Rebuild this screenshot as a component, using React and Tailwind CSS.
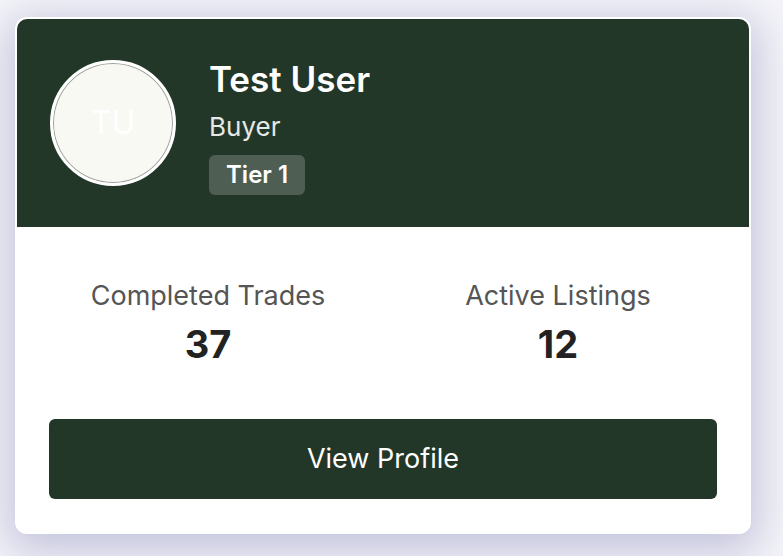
export default function App() {
  return (
    <div
      className="min-h-screen bg-[#f4f4f9] pl-[15px] pt-[17px]"
      style={{ fontFamily: "Inter, 'Noto Sans', sans-serif" }}
    >
      <div className="w-[736px] overflow-hidden rounded-xl border-2 border-white bg-white shadow-[0_10px_40px_8px_rgba(110,110,170,0.35)]">
        <div className="flex h-[208px] items-center gap-[33px] bg-[#233729] pl-[33px]">
          <div className="flex h-[126px] w-[126px] items-center justify-center rounded-full border-[3px] border-white bg-[#f8f9f3] ring-1 ring-inset ring-[#9ca39d]">
            <span className="text-[32px] text-white">TU</span>
          </div>
          <div className="flex flex-col items-start pt-[8px]">
            <h2 className="text-[35px] font-semibold leading-[40px] text-white">Test User</h2>
            <p className="mt-[12px] text-[26px] leading-8 text-[#e6e9e6]">Buyer</p>
            <span className="mt-[12px] flex h-10 items-center rounded-md bg-[#4e5e53] px-[17px] text-[24px] font-semibold text-white">
              Tier 1
            </span>
          </div>
        </div>

        <div className="px-8 pb-[33px] pt-[53px]">
          <div className="grid grid-cols-2 gap-8 text-center">
            <div>
              <p className="text-[27px] leading-8 text-[#555555]">Completed Trades</p>
              <p className="mt-3 text-[38px] font-bold leading-10 text-[#222222]">37</p>
            </div>
            <div>
              <p className="text-[27px] leading-8 text-[#555555]">Active Listings</p>
              <p className="mt-3 text-[38px] font-bold leading-10 text-[#222222]">12</p>
            </div>
          </div>
          <button
            type="button"
            className="mt-[55px] flex h-20 w-full items-center justify-center rounded-md bg-[#233729] text-[27px] font-normal text-white"
          >
            View Profile
          </button>
        </div>
      </div>
    </div>
  );
}
